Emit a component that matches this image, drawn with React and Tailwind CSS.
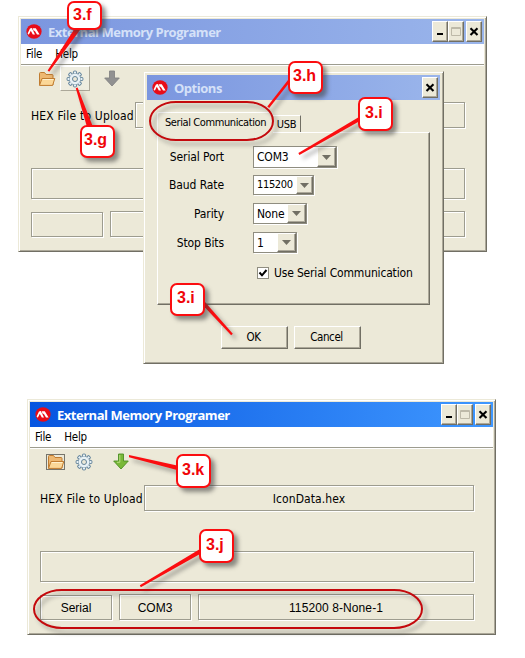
import React from "react";

const etched =
  "box-border border border-[#9d9c8f] shadow-[1px_1px_0_#fff,inset_1px_1px_0_#fff]";
const raised =
  "box-border border border-t-white border-l-white border-b-[#716f64] border-r-[#716f64] shadow-[inset_-1px_-1px_0_#aca899] bg-[#ece9d8]";
const ui = "font-['DejaVu_Sans_Condensed','DejaVu_Sans',sans-serif] text-black";

function Logo() {
  return (
    <svg width="16" height="15" viewBox="0 0 16 15" className="shrink-0">
      <ellipse cx="8" cy="7.5" rx="7.6" ry="7.3" fill="#e80c18" />
      <path d="M1.6 9.6 4 4.6 5.8 4 9 10.6H6.8L4.8 6.8 2.8 10.8Z" fill="#fff" />
      <path d="M6.6 4.2H9.8L13.6 10.6H11L8.6 6.4 8 7.4Z" fill="#fff" />
    </svg>
  );
}

function Folder({ focused }) {
  return (
    <svg width="20" height="18" viewBox="0 0 20 18" className="shrink-0">
      {focused && <rect x="0.5" y="1.5" width="18" height="15" fill="none" stroke="#000" strokeDasharray="1 1" />}
      <path d="M2.5 15V3.5q0-1 1-1h4l1.5 2h6q1 0 1 1V15Z" fill="#eeb871" stroke="#c07c30" />
      <path d="M2.5 15.4 5 8.5H17.8L15.6 15.4Z" fill="#fbd797" stroke="#c07c30" strokeLinejoin="round" />
      <path d="M5.8 9.5H16.4" stroke="#fff0cd" />
    </svg>
  );
}

const teeth = [0, 45, 90, 135, 180, 225, 270, 315];
function Gear() {
  return (
    <svg width="18" height="18" viewBox="-9 -9 18 18" className="shrink-0">
      {teeth.map((a) => (
        <rect key={a} x="-1.6" y="-7.9" width="3.2" height="3.4" rx="0.8" fill="#e8f1f5" stroke="#64849b" strokeWidth="1" transform={`rotate(${a})`} />
      ))}
      <circle r="5.3" fill="#e8f1f5" stroke="#64849b" strokeWidth="0.9" />
      <circle r="4.5" fill="none" stroke="#e8f1f5" strokeWidth="1.8" />
      <circle r="2.5" fill="#ece9d8" stroke="#64849b" strokeWidth="1" />
    </svg>
  );
}

function DownArrow({ active }) {
  return (
    <svg width="16" height="17" viewBox="0 0 16 17" className="shrink-0">
      <path d="M5.5 1h5v7h4.8L8 16 .7 8h4.8Z" fill={active ? "#79b838" : "#919191"} stroke={active ? "#4b8f22" : "#858585"} strokeWidth="0.9" />
      {active && <path d="M6.8 2v7.3H4" fill="none" stroke="#b9dc82" />}
    </svg>
  );
}

function CaptionButton({ kind }) {
  return (
    <div className={`${raised} h-[21px] w-[16px] flex items-center justify-center`}>
      <svg width="12" height="15" viewBox="0 0 12 15" className="shrink-0">
        {kind === "min" && <path d="M3 10h6" stroke="#000" strokeWidth="2" />}
        {kind === "max" && <path d="M1.5 3.5h9v8h-9zM1.5 4.5h9" fill="none" stroke="#bdb9a8" />}
        {kind === "close" && <path d="M2.5 4.2 9.5 11M9.5 4.2 2.5 11" stroke="#000" strokeWidth="2.1" />}
      </svg>
    </div>
  );
}

function TitleBar({ title, tone, dialog }) {
  return (
    <div className={`flex h-[25px] items-center pl-[5px] pr-[2px] ${tone}`}>
      <Logo />
      <span className="ml-[6px] grow whitespace-nowrap font-['Open_Sans',sans-serif] text-[13px] font-bold leading-[20px] tracking-[-0.48px]">{title}</span>
      {!dialog && <CaptionButton kind="min" />}
      {!dialog && <CaptionButton kind="max" />}
      <div className="ml-[2px] flex"><CaptionButton kind="close" /></div>
    </div>
  );
}

const frame =
  "box-border border border-t-[#ece9d8] border-l-[#ece9d8] border-b-[#716f64] border-r-[#716f64] bg-[#ece9d8] shadow-[inset_1px_1px_0_#fff,inset_-1px_-1px_0_#aca899]";

function MainWindow({ place, tone, active, file, status }) {
  return (
    <div className={`absolute h-[236px] w-[469px] ${place} ${frame} ${ui} px-[2px] pt-[2px]`}>
      <TitleBar title="External Memory Programer" tone={tone} />
      <div className="flex h-[21px] items-center gap-[13px] border-b border-[#9d9c8f] bg-white pl-[5px] pt-[2px] text-[11.5px] tracking-[-0.25px] shadow-[0_1px_0_#fff]">
        <span>File</span>
        <span>Help</span>
      </div>
      <div className="flex h-[26px] items-center pl-[16px] pt-px">
        <Folder focused={active} />
        <div className={`ml-[3px] flex h-[25px] w-[30px] items-center justify-center border ${active ? "border-transparent" : "border-t-white border-l-white border-r-[#aca899] border-b-[#aca899] bg-[#efede0]"}`}>
          <Gear />
        </div>
        <div className="ml-[14px]"><DownArrow active={active} /></div>
      </div>
      <div className="flex flex-col pl-[10px]">
        <div className="mt-[11px] flex items-center text-[12px]">
          <span className="w-[104px] whitespace-nowrap pt-px tracking-[0.2px]">HEX File to Upload</span>
          <div className={`${etched} flex h-[26px] w-[330px] items-center justify-center pt-px tracking-[0.1px]`}>{file}</div>
        </div>
        <div className={`${etched} mt-[40px] h-[31px] w-[434px]`} />
        <div className="mt-[12px] flex items-end gap-[7px] font-['Liberation_Sans',Arial,sans-serif] text-[12px]">
          <div className={`${etched} flex h-[25px] w-[72px] items-center justify-center`}>{status[0]}</div>
          <div className={`${etched} flex h-[26px] w-[72px] items-center justify-center pt-px`}>{status[1]}</div>
          <div className={`${etched} flex h-[26px] w-[276px] items-center justify-center pt-px tracking-[0.1px]`}>{status[2]}</div>
        </div>
      </div>
    </div>
  );
}

function Combo({ value, size, arrow, text = "text-[12px] tracking-[-0.2px]" }) {
  return (
    <div className={`box-border flex border border-[#8f8d80] bg-white pl-[3px] shadow-[1px_1px_0_#fff] ${size}`}>
      <span className={`grow self-center whitespace-nowrap ${text}`}>{value}</span>
      <div className={`${raised} flex shrink-0 items-center justify-center ${arrow}`}>
        <svg width="9" height="5"><path d="M0 0h9L4.5 5Z" fill="#716f64" /></svg>
      </div>
    </div>
  );
}

function Field({ label, height, children }) {
  return (
    <div className={`flex items-center ${height}`}>
      <span className="w-[66px] whitespace-nowrap text-right text-[12px] tracking-[-0.1px]">{label}</span>
      <div className="ml-[29px] flex">{children}</div>
    </div>
  );
}

function OptionsDialog() {
  return (
    <div className={`absolute left-[143px] top-[71px] h-[293px] w-[301px] ${frame} ${ui} px-[3px] pt-[3px]`}>
      <TitleBar dialog title="Options" tone="bg-gradient-to-r from-[#7b96df] to-[#9ab5eb] text-[#d5e1f8]" />
      <div className="ml-[10px] mt-[12px] flex h-[20px] w-[273px] items-end text-[11px]">
        <div className="-mb-px flex h-[21px] w-[116px] shrink-0 items-center justify-center whitespace-nowrap rounded-t-[2px] border-l border-t border-white bg-[#ece9d8] pt-px tracking-[-0.4px]">Serial Communication</div>
        <div className="flex h-[17px] w-[28px] items-center justify-center border-r border-t border-r-[#716f64] border-t-white pt-[2px] tracking-[-0.2px]">USB</div>
      </div>
      <div className="ml-[10px] h-[173px] w-[273px] border border-b-[#716f64] border-l-white border-r-[#716f64] border-t-white pt-[10px] shadow-[inset_-1px_-1px_0_#aca899]">
        <Field label="Serial Port" height="h-[28px]"><Combo value="COM3" size="h-[22px] w-[84px]" arrow="w-[19px]" /></Field>
        <Field label="Baud Rate" height="h-[28px]"><Combo value="115200" size="h-[20px] w-[61px]" arrow="w-[17px]" text="text-[11px] tracking-[-0.35px]" /></Field>
        <Field label="Parity" height="h-[29px]"><Combo value="None" size="h-[21px] w-[54px]" arrow="w-[19px]" /></Field>
        <Field label="Stop Bits" height="h-[29px]"><Combo value="1" size="h-[21px] w-[44px]" arrow="w-[19px]" /></Field>
        <div className="flex h-[31px] items-center pl-[99px] text-[12px]">
          <svg width="12" height="12" className="shrink-0">
            <rect x="0.5" y="0.5" width="11" height="11" fill="#fff" stroke="#8f8d80" />
            <path d="M2.5 5.5 5 8.3 9.5 3" fill="none" stroke="#000" strokeWidth="2" />
          </svg>
          <span className="ml-[5px] whitespace-nowrap tracking-[-0.17px]">Use Serial Communication</span>
        </div>
      </div>
      <div className="mt-[21px] flex gap-[6px] pl-[74px] text-[11.5px] tracking-[-0.4px]">
        <div className={`${raised} flex h-[23px] w-[67px] items-center justify-center pr-[2px]`}>OK</div>
        <div className={`${raised} flex h-[23px] w-[67px] items-center justify-center pr-[2px]`}>Cancel</div>
      </div>
    </div>
  );
}

function Callout({ place, children }) {
  return (
    <div className={`absolute box-border w-[35px] rounded-[7px] border-2 border-[#fb0d10] bg-white font-['Liberation_Sans',Arial,sans-serif] text-[16px] font-bold leading-[18px] text-[#f00509] shadow-[4px_4px_4px_rgba(60,60,60,0.55)] ${place}`}>
      {children}
    </div>
  );
}

function Markers() {
  return (
    <svg width="525" height="658" className="absolute left-0 top-0 [filter:drop-shadow(4px_4px_2px_rgba(60,60,60,0.45))]">
      <g fill="none" stroke="#c4090d" strokeWidth="2">
        <rect x="150" y="102" width="123" height="38" rx="26" ry="19" />
        <rect x="34" y="590" width="388" height="38" rx="28" ry="19" />
      </g>
      <g fill="#fb0d10">
        <path d="M47.6 70.5 49.2 71.8 80 30 75 28Z" />
        <path d="M75.8 88.3 77.6 87.5 93 127 87 127Z" />
        <path d="M267.3 106.5 269.2 107.9 289 83 288 80Z" />
        <path d="M298.4 153.1 299.4 155.1 359 121.5 359 117Z" />
        <path d="M231.2 335.2 232.8 333.8 205 302 205 307.5Z" />
        <path d="M129 455 129 457.2 177 470 177 465.5Z" />
        <path d="M139.8 585.2 140.8 587.2 200 554 200 549Z" />
      </g>
    </svg>
  );
}

export default function App() {
  return (
    <div className="relative h-[658px] w-[525px] overflow-hidden bg-white">
      <MainWindow place="left-[18px] top-[16px]" tone="bg-gradient-to-r from-[#7b96df] to-[#9ab5eb] text-[#d5e1f8]" file="" status={["", "", ""]} />
      <OptionsDialog />
      <MainWindow active place="left-[27px] top-[399px]" tone="bg-gradient-to-r from-[#0755e0] to-[#3f97ff] text-white" file="IconData.hex" status={["Serial", "COM3", "115200 8-None-1"]} />
      <Markers />
      <Callout place="left-[67px] top-[1px] h-[29px] pl-[4px] pt-[3px]">3.f</Callout>
      <Callout place="left-[80px] top-[125px] h-[33px] pl-[2px] pt-[4px]">3.g</Callout>
      <Callout place="left-[288px] top-[61px] h-[33px] pl-[3px] pt-[4px]">3.h</Callout>
      <Callout place="left-[358px] top-[97px] h-[34px] pl-[5px] pt-[5px]">3.i</Callout>
      <Callout place="left-[170px] top-[283px] h-[33px] pl-[5px] pt-[4px]">3.i</Callout>
      <Callout place="left-[176px] top-[454px] h-[34px] pl-[4px] pt-[5px]">3.k</Callout>
      <Callout place="left-[199px] top-[529px] h-[34px] pl-[5px] pt-[5px]">3.j</Callout>
    </div>
  );
}
